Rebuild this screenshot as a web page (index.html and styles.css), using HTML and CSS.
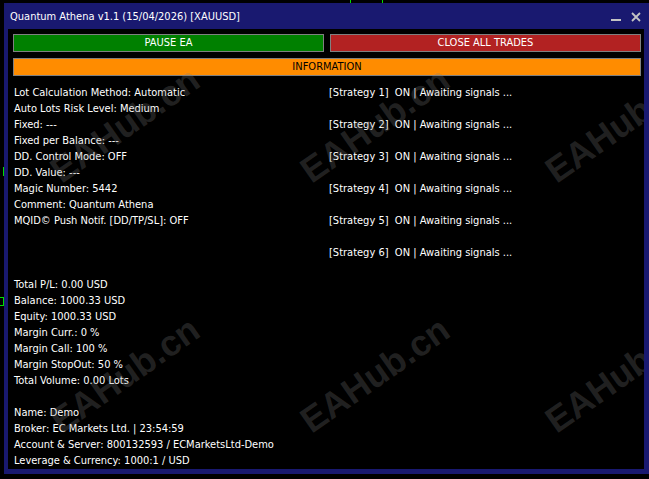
FILE: index.html
```html
<!DOCTYPE html>
<html lang="en">
<head>
    <meta charset="UTF-8">
    <meta name="viewport" content="width=device-width, initial-scale=1.0">
    <title>Quantum Athena v1.1</title>
    <link rel="stylesheet" href="styles.css">
</head>
<body>
    <!-- pieces of the chart left visible around the panel -->
    <div class="chart">
        <span class="wick wick-a"></span>
        <span class="wick wick-b"></span>
        <span class="wick wick-c"></span>
        <span class="candle candle-a"></span>
    </div>

    <div class="panel">
        <div class="title-bar">
            <span class="title">Quantum Athena v1.1 (15/04/2026) [XAUUSD]</span>
            <div class="window-btns">
                <svg class="win-icon" width="10" height="10" viewBox="0 0 10 10">
                    <rect x="0" y="7" width="10" height="2" fill="#c4c4c4"/>
                </svg>
                <svg class="win-icon" width="10" height="10" viewBox="0 0 10 10">
                    <path d="M1 1 L9 9 M9 1 L1 9" stroke="#c4c4c4" stroke-width="1.8" fill="none"/>
                </svg>
            </div>
        </div>

        <div class="panel-body">
            <div class="actions">
                <button class="btn btn-pause">PAUSE EA</button>
                <button class="btn btn-close">CLOSE ALL TRADES</button>
            </div>
            <button class="btn btn-info">INFORMATION</button>

            <div class="info">
                <div class="info-left">
                    <div class="group">
                        <div>Lot Calculation Method: Automatic</div>
                        <div>Auto Lots Risk Level: Medium</div>
                        <div>Fixed: ---</div>
                        <div>Fixed per Balance: ---</div>
                        <div>DD. Control Mode: OFF</div>
                        <div>DD. Value: ---</div>
                        <div>Magic Number: 5442</div>
                        <div>Comment: Quantum Athena</div>
                        <div>MQID© Push Notif. [DD/TP/SL]: OFF</div>
                    </div>
                    <div class="group group-account">
                        <div>Total P/L: 0.00 USD</div>
                        <div>Balance: 1000.33 USD</div>
                        <div>Equity: 1000.33 USD</div>
                        <div>Margin Curr.: 0 %</div>
                        <div>Margin Call: 100 %</div>
                        <div>Margin StopOut: 50 %</div>
                        <div>Total Volume: 0.00 Lots</div>
                    </div>
                    <div class="group group-broker">
                        <div>Name: Demo</div>
                        <div>Broker: EC Markets Ltd. | 23:54:59</div>
                        <div>Account &amp; Server: 800132593 / ECMarketsLtd-Demo</div>
                        <div>Leverage &amp; Currency: 1000:1 / USD</div>
                    </div>
                </div>
                <div class="info-right">
                    <div class="strategy">[Strategy 1]  ON | Awaiting signals ...</div>
                    <div class="strategy">[Strategy 2]  ON | Awaiting signals ...</div>
                    <div class="strategy">[Strategy 3]  ON | Awaiting signals ...</div>
                    <div class="strategy">[Strategy 4]  ON | Awaiting signals ...</div>
                    <div class="strategy">[Strategy 5]  ON | Awaiting signals ...</div>
                    <div class="strategy">[Strategy 6]  ON | Awaiting signals ...</div>
                </div>
            </div>

            <!-- site watermark tiled over the panel -->
            <div class="watermarks">
                <span class="wm row-1 col-1">EAHub.cn</span>
                <span class="wm row-1 col-2">EAHub.cn</span>
                <span class="wm row-1 col-3">EAHub.cn</span>
                <span class="wm row-2 col-1">EAHub.cn</span>
                <span class="wm row-2 col-2">EAHub.cn</span>
                <span class="wm row-2 col-3">EAHub.cn</span>
            </div>
        </div>
    </div>
</body>
</html>
```

FILE: styles.css
```css
* {
    box-sizing: border-box;
}

body {
    margin: 0;
    width: 649px;
    height: 479px;
    overflow: hidden;
    position: relative;
    background: #000;
    color: #fff;
    font-family: "DejaVu Sans Condensed", "DejaVu Sans", sans-serif;
    font-stretch: condensed;
    font-size: 11px;
}

/* chart behind the panel */
.chart {
    position: absolute;
    inset: 0;
}

.wick {
    position: absolute;
    width: 1px;
    background: #00e000;
}

.wick-a { left: 350px; top: 0; height: 4px; }
.wick-b { left: 382px; top: 0; height: 4px; }
.wick-c { left: 3px; top: 167px; height: 9px; }

.candle {
    position: absolute;
    left: -1px;
    top: 297px;
    width: 5px;
    height: 9px;
    border: 1px solid #00e000;
    background: #000;
}

/* panel window */
.panel {
    position: relative;
    z-index: 1;
    margin: 3px 0 0 4px;
    width: 645px;
    height: 471px;
    background: #191970;
    padding: 0 5px 5px 4px;
    display: flex;
    flex-direction: column;
}

.title-bar {
    height: 26px;
    display: flex;
    align-items: center;
    justify-content: space-between;
}

.title {
    padding-left: 2px;
    font-size: 11px;
    color: #fff;
}

.window-btns {
    display: flex;
    gap: 10px;
    margin-right: 3px;
    margin-top: 1px;
}

.win-icon {
    display: block;
}

.panel-body {
    flex: 1;
    position: relative;
    overflow: hidden;
    background: #000;
    padding: 5px 3px 0 5px;
}

/* buttons */
.actions {
    display: flex;
    gap: 6px;
}

.btn {
    display: block;
    height: 18px;
    padding: 0;
    border: 1px solid #808080;
    font: inherit;
    line-height: 16px;
    text-align: center;
    color: #fff;
}

.actions .btn {
    flex: 1;
}

.btn-pause {
    background: #008000;
}

.btn-close {
    background: #b22222;
}

.btn-info {
    width: 100%;
    margin-top: 6px;
    background: #ff8c00;
    color: #000;
}

/* info text */
.info {
    display: grid;
    grid-template-columns: 315px 1fr;
    padding: 9px 0 0 1px;
    line-height: 16px;
}

.group-account {
    margin-top: 48px;
}

.group-broker {
    margin-top: 16px;
}

.strategy {
    white-space: pre;
}

.strategy + .strategy {
    margin-top: 16px;
}

/* watermark */
.watermarks {
    position: absolute;
    inset: 0;
    pointer-events: none;
}

.wm {
    position: absolute;
    font-family: "Liberation Sans", Arial, sans-serif;
    font-weight: bold;
    font-size: 36px;
    color: rgba(128, 128, 128, 0.26);
    white-space: nowrap;
    transform: translate(-50%, -50%) rotate(-35deg);
}

.row-1 { top: 96px; }
.row-2 { top: 346px; }
.col-1 { left: 117px; }
.col-2 { left: 367px; }
.col-3 { left: 612px; }
```
